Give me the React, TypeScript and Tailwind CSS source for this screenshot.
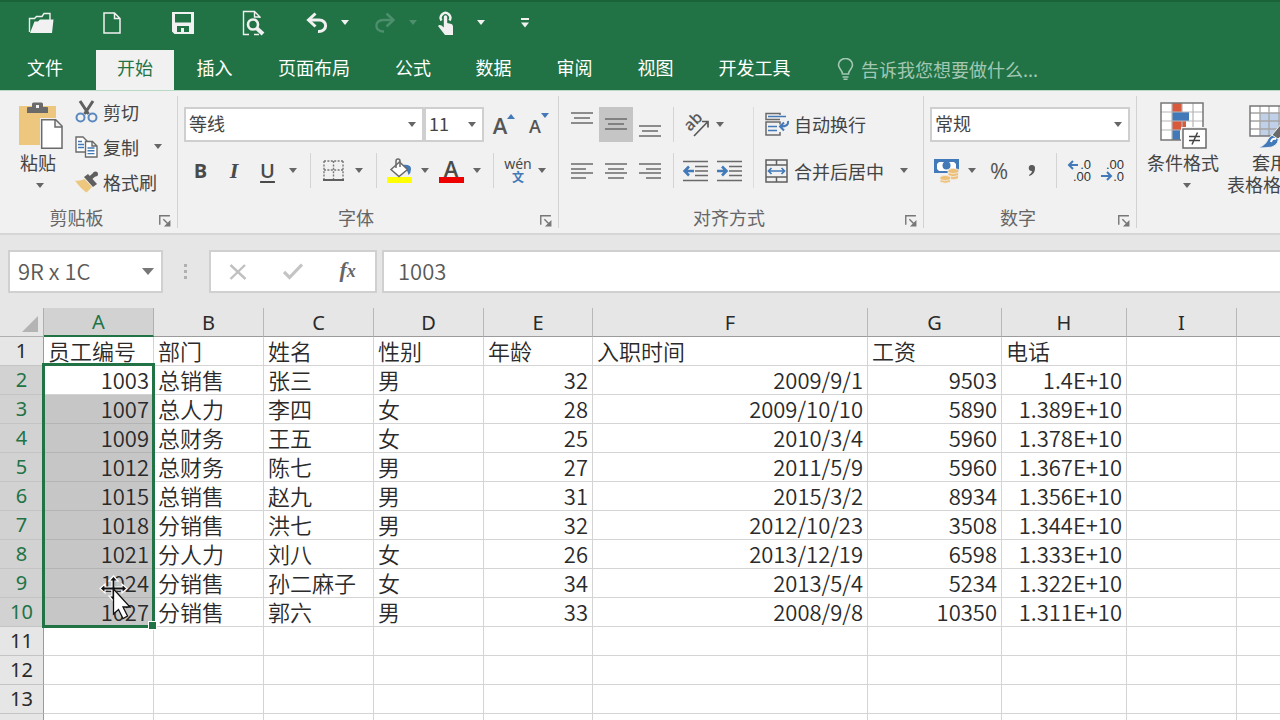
import type { ReactNode } from 'react';
import clsx from 'clsx';

const columns = [
  { name: 'A', width: 'w-[110px]' },
  { name: 'B', width: 'w-[110px]' },
  { name: 'C', width: 'w-[110px]' },
  { name: 'D', width: 'w-[110px]' },
  { name: 'E', width: 'w-[109px]' },
  { name: 'F', width: 'w-[275px]' },
  { name: 'G', width: 'w-[134px]' },
  { name: 'H', width: 'w-[125px]' },
  { name: 'I', width: 'w-[110px]' },
  { name: '', width: 'w-[110px]' },
];

const rows: string[][] = [
  ['员工编号', '部门', '姓名', '性别', '年龄', '入职时间', '工资', '电话'],
  ['1003', '总销售', '张三', '男', '32', '2009/9/1', '9503', '1.4E+10'],
  ['1007', '总人力', '李四', '女', '28', '2009/10/10', '5890', '1.389E+10'],
  ['1009', '总财务', '王五', '女', '25', '2010/3/4', '5960', '1.378E+10'],
  ['1012', '总财务', '陈七', '男', '27', '2011/5/9', '5960', '1.367E+10'],
  ['1015', '总销售', '赵九', '男', '31', '2015/3/2', '8934', '1.356E+10'],
  ['1018', '分销售', '洪七', '男', '32', '2012/10/23', '3508', '1.344E+10'],
  ['1021', '分人力', '刘八', '女', '26', '2013/12/19', '6598', '1.333E+10'],
  ['1024', '分销售', '孙二麻子', '女', '34', '2013/5/4', '5234', '1.322E+10'],
  ['1027', '分销售', '郭六', '男', '33', '2008/9/8', '10350', '1.311E+10'],
  [],
  [],
  [],
  [],
];

const tabs = [
  { label: '文件', width: 'w-[90px] mr-[6px]' },
  { label: '开始', width: 'w-[78px]', active: true },
  { label: '插入', width: 'w-[81px]' },
  { label: '页面布局', width: 'w-[118px]' },
  { label: '公式', width: 'w-[80px]' },
  { label: '数据', width: 'w-[81px]' },
  { label: '审阅', width: 'w-[81px]' },
  { label: '视图', width: 'w-[81px]' },
  { label: '开发工具', width: 'w-[117px]' },
];

function Caret({ className = 'text-[#666666]' }: { className?: string }) {
  return (
    <svg className={className} width="8" height="5" viewBox="0 0 8 5" fill="currentColor">
      <path d="M0 0h8L4 5z" />
    </svg>
  );
}

interface IconButtonProps {
  label: string;
  className?: string;
  children: ReactNode;
}

function IconButton({ label, className, children }: IconButtonProps) {
  return (
    <button type="button" aria-label={label} className={clsx('flex h-[35px] shrink-0 items-center justify-center', className)}>
      {children}
    </button>
  );
}

function Separator({ className }: { className: string }) {
  return (
    <div className={clsx('flex h-[35px] shrink-0 justify-center', className)}>
      <div className="w-px bg-[#d4d4d4]" />
    </div>
  );
}

interface ComboProps {
  label: string;
  value: string;
  className: string;
}

function Combo({ label, value, className }: ComboProps) {
  return (
    <div className={clsx('relative h-[35px] border-2 border-[#cfcfcf] bg-white', className)}>
      <select aria-label={label} defaultValue={value} className="h-full w-full appearance-none px-[3px] pb-[3px] text-lg leading-[28px] text-[#444444] outline-none">
        <option>{value}</option>
      </select>
      <div className="pointer-events-none absolute inset-y-0 right-[6px] flex items-center">
        <Caret />
      </div>
    </div>
  );
}

interface GroupProps {
  title: string;
  className: string;
  children: ReactNode;
}

function Group({ title, className, children }: GroupProps) {
  return (
    <section className={clsx('flex shrink-0 flex-col', className)}>
      <div className="h-[111px]">{children}</div>
      <div className="flex h-[30px] items-center">
        <h2 className="flex-1 text-center text-lg leading-[28px] text-[#666666]">{title}</h2>
        <button type="button" aria-label={`${title}设置`} className="flex h-full w-[24px] items-center pt-[8px] pl-[6px]">
          <svg width="12" height="12" viewBox="0 0 11 11" fill="none" stroke="#777777" strokeWidth="1.3">
            <path d="M.7 9V.7H10M4 4l5 5" />
            <path d="M10.500 4.500v6h-6z" fill="#777777" stroke="none" />
          </svg>
        </button>
      </div>
    </section>
  );
}

function GroupDivider() {
  return <div className="my-[5px] w-px shrink-0 bg-[#d2d2d2]" />;
}

/* Lines are [x1, x2, y] */
function LinesIcon({ lines }: { lines: number[][] }) {
  return (
    <svg width="22" height="26" viewBox="0 0 22 26" stroke="#6a6a6a" strokeWidth="1.5">
      {lines.map(([x1, x2, y]) => (
        <path key={y} d={`M${x1} ${y}H${x2}`} />
      ))}
    </svg>
  );
}

function QuickAccess() {
  return (
    <div className="flex h-[50px] items-center border-t-2 border-[#1a6339] pb-[7px] pl-[5px] text-[#f1f1f1]">
      <IconButton label="打开" className="w-[71px]">
        <svg width="26" height="22" viewBox="0 0 26 22" fill="none" stroke="currentColor" strokeWidth="1.4">
          <path d="M1.500 20V6.500h5l2-2H14l2-3h6V8" />
          <path d="M2 21L6.500 9.500H10l2-2h13.500L24 21z" fill="currentColor" stroke="none" />
        </svg>
      </IconButton>
      <IconButton label="新建" className="w-[71px]">
        <svg width="18" height="22" viewBox="0 0 18 22" fill="none" stroke="currentColor" strokeWidth="1.5">
          <path d="M1 1h10.500l5.500 5.500V21H1zM11.500 1v5.500H17" />
        </svg>
      </IconButton>
      <IconButton label="保存" className="w-[71px]">
        <svg width="22" height="22" viewBox="0 0 22 22" fill="currentColor">
          <path fillRule="evenodd" d="M0 0h22v22H2.500L0 19.500zM3 2v8.500h16V2zM5 14v6h4v-4h3v4h5v-6z" />
        </svg>
      </IconButton>
      <IconButton label="打印预览" className="w-[71px]">
        <svg width="24" height="26" viewBox="0 0 24 26" fill="none" stroke="currentColor">
          <path d="M7 24.500H1.500V1.500h11L18 7v1M12.500 1.500V7H18M12 24.500h5" strokeWidth="1.4" />
          <circle cx="11" cy="14.500" r="5" strokeWidth="2.600" />
          <path d="M15 18.500l6 5.500" strokeWidth="4" />
        </svg>
      </IconButton>
      <IconButton label="撤消" className="ml-2 w-10">
        <svg width="24" height="22" viewBox="0 0 24 22" fill="none" stroke="currentColor" strokeWidth="3">
          <path d="M4 8h10c9 0 9 12-1 11.500" />
          <path d="M10.500 1.500L3.500 8l7 6.500" />
        </svg>
      </IconButton>
      <IconButton label="撤消列表" className="w-4">
        <Caret className="text-[#f1f1f1]" />
      </IconButton>
      <IconButton label="恢复" className="ml-3 w-10 text-[#4d8f6c]">
        <svg width="24" height="22" viewBox="0 0 24 22" fill="none" stroke="currentColor" strokeWidth="2.400">
          <path d="M20 8H10C1 8 1 20 11 19.500" />
          <path d="M13.500 1.500l7 6.500-7 6.500" />
        </svg>
      </IconButton>
      <IconButton label="恢复列表" className="w-4">
        <Caret className="text-[#4d8f6c]" />
      </IconButton>
      <IconButton label="触摸/鼠标模式" className="ml-1 w-10">
        <svg className="ml-[2px]" width="18" height="26" viewBox="0 0 18 26" fill="currentColor">
          <path d="M4.500 10.500a4.800 4.800 0 1 1 8 0" fill="none" stroke="currentColor" strokeWidth="2.400" />
          <path d="M6.800 6.500q1.700-2.500 3.400 0V13l4.300 1q1.500.5 1.500 2.500V25H8L1 16q2-2.500 5.800 1.500z" />
        </svg>
      </IconButton>
      <IconButton label="模式列表" className="w-8">
        <Caret className="text-[#f1f1f1]" />
      </IconButton>
      <IconButton label="自定义快速访问工具栏" className="w-14">
        <svg width="8" height="10" viewBox="0 0 8 10" fill="currentColor">
          <path d="M0 0h8v2H0zM0 4.500h8L4 9.500z" />
        </svg>
      </IconButton>
    </div>
  );
}

function TabBar() {
  return (
    <nav className="flex h-10 items-stretch text-lg text-white">
      {tabs.map((tab) => (
        <button
          key={tab.label}
          type="button"
          className={clsx(
            'flex shrink-0 items-center justify-center pb-[6px] leading-[28px] whitespace-nowrap',
            tab.width,
            tab.active && 'bg-[#f1f1f1] text-[#217346]',
          )}
        >
          {tab.label}
        </button>
      ))}
      <label className="flex flex-1 items-center pb-[2px] pl-[24px] text-[#a3c7b2]">
        <svg width="17" height="22" viewBox="0 0 17 22" fill="none" stroke="currentColor" strokeWidth="1.600">
          <path d="M5.500 16c0-4-4-5-4-9a7 6.500 0 0 1 14 0c0 4-4 5-4 9zM5.500 19h6M6.500 21.200h4" />
        </svg>
        <input
          type="text"
          aria-label="告诉我您想要做什么"
          placeholder="告诉我您想要做什么..."
          className="ml-[7px] h-[28px] flex-1 bg-transparent text-lg leading-[28px] outline-none placeholder:text-[#a3c7b2]"
        />
      </label>
    </nav>
  );
}

function ClipboardGroup() {
  return (
    <Group title="剪贴板" className="w-[177px]">
      <div className="flex whitespace-nowrap">
        <button type="button" className="ml-2 flex w-[60px] flex-col items-center pt-[10px] text-[#444444]">
          <svg width="50" height="48" viewBox="0 0 50 48">
            <path d="M6 5h37v39H6z" fill="#eec77e" />
            <path d="M14 12V7q0-1 1-1h4V3q0-1.500 1.500-1.500h8Q30 1.500 30 3v3h4q1 0 1 1v5z" fill="#6a6a6a" />
            <path d="M23 4h3v3h-3z" fill="#f1f1f1" />
            <path d="M27 17h16.500L50 24v24H27z" fill="#f1f1f1" />
            <path d="M28.700 18.700h14l6.300 6.300v22.200H28.700zM42 18.700V26h7" fill="#fff" stroke="#6a6a6a" strokeWidth="1.500" />
          </svg>
          <span className="pb-[2px] text-lg leading-[26px]">粘贴</span>
          <span className="flex h-4 items-center pl-1">
            <Caret />
          </span>
        </button>
        <div className="flex flex-1 flex-col pt-[3px] pl-[7px] text-lg leading-[28px] text-[#444444]">
          <button type="button" className="flex h-[35px] items-center gap-[5px]">
            <svg width="23" height="24" viewBox="0 0 23 24" fill="none">
              <path d="M5 1l8.500 13M18 1L9.500 14" stroke="#5f5f5f" strokeWidth="3" />
              <circle cx="5.500" cy="17.500" r="4" stroke="#5a88bf" strokeWidth="2" />
              <circle cx="17.500" cy="17.500" r="4" stroke="#5a88bf" strokeWidth="2" />
            </svg>
            剪切
          </button>
          <div className="flex h-[35px] items-center">
            <button type="button" className="flex items-center gap-[5px]">
              <svg width="23" height="22" viewBox="0 0 23 22" fill="#fff" strokeWidth="1.400">
                <path d="M1 1h7l4 4v11H1z" stroke="#6a6a6a" />
                <path d="M3 5.500h4M3 8.500h6M3 11.500h6" stroke="#4279b8" />
                <path d="M10.500 5.500h7l4.500 4.500v11H10.500zM17 5.500V10h5" stroke="#6a6a6a" />
                <path d="M12.500 12h7M12.500 14.800h7M12.500 17.600h7" stroke="#4279b8" />
              </svg>
              复制
            </button>
            <button type="button" aria-label="复制选项" className="flex h-full w-[38px] items-center justify-center">
              <Caret />
            </button>
          </div>
          <button type="button" className="flex h-[35px] items-center gap-[5px]">
            <svg width="23" height="22" viewBox="0 0 23 22">
              <path d="M0 9.500q5 1 9.500-1.500l7.500 8-5.500 5.500Q5 17 0 9.500z" fill="#eec77e" />
              <path d="M9 6l4-3 9 10-4 3z" fill="#5f5f5f" />
              <path d="M15.500 7l5-4.500" stroke="#5f5f5f" strokeWidth="4" />
              <circle cx="20.500" cy="3" r="2.500" fill="#5f5f5f" />
            </svg>
            格式刷
          </button>
        </div>
      </div>
    </Group>
  );
}

function FontGroup() {
  return (
    <Group title="字体" className="w-[380px]">
      <div className="flex flex-col gap-[11px] pt-[16px] pl-[6px] text-[#555555]">
        <div className="flex">
          <Combo label="字体" value="等线" className="w-[240px]" />
          <Combo label="字号" value="11" className="w-[60px]" />
          <IconButton label="增大字号" className="w-[40px]">
            <span className="font-['Open_Sans'] text-[22px] leading-[30px] font-semibold">A</span>
            <svg className="mb-[16px]" width="8" height="5" viewBox="0 0 8 5">
              <path d="M0 5h8L4 0z" fill="#4279b8" />
            </svg>
          </IconButton>
          <IconButton label="减小字号" className="w-[30px]">
            <span className="pt-[2px] font-['Open_Sans'] text-lg leading-[30px] font-semibold">A</span>
            <svg className="mb-[18px]" width="8" height="5" viewBox="0 0 8 5">
              <path d="M0 0h8L4 5z" fill="#4279b8" />
            </svg>
          </IconButton>
        </div>
        <div className="flex font-['Open_Sans'] text-[20px] text-[#4a4a4a]">
          <IconButton label="加粗" className="w-[33px] font-bold">B</IconButton>
          <IconButton label="倾斜" className="w-[34px] font-['Liberation_Serif'] text-[22px] font-bold italic">I</IconButton>
          <IconButton label="下划线" className="w-[33px] font-semibold underline underline-offset-3">U</IconButton>
          <IconButton label="下划线样式" className="w-[18px]"><Caret /></IconButton>
          <Separator className="w-[16px]" />
          <IconButton label="边框" className="w-[30px]">
            <svg width="21" height="21" viewBox="0 0 21 21" fill="none" stroke="#777777" strokeWidth="1.400">
              <path d="M1 1h19M1 10h19M1 1v18M10.500 1v18M20 1v18" strokeDasharray="2 1.400" />
              <path d="M0 20h21" stroke="#5f5f5f" strokeWidth="2" />
            </svg>
          </IconButton>
          <IconButton label="边框样式" className="w-[22px]"><Caret /></IconButton>
          <Separator className="w-[12px]" />
          <IconButton label="填充颜色" className="w-[36px]">
            <svg width="26" height="26" viewBox="0 0 26 26" fill="none">
              <path d="M0 19h25v6H0z" fill="#ffff00" />
              <path d="M15 7q9-1 9 4 0 4-2.500 6-1-6-5-7z" fill="#4279b8" />
              <path d="M4 11.500L12.500 4l8 7.500-8.500 7z" fill="#fff" stroke="#6a6a6a" strokeWidth="1.500" />
              <path d="M9 10V3q0-2 2-2t2 2v6" stroke="#6a6a6a" strokeWidth="1.500" />
            </svg>
          </IconButton>
          <IconButton label="填充颜色列表" className="w-[14px]"><Caret /></IconButton>
          <IconButton label="字体颜色" className="w-[38px] flex-col">
            <span className="h-[18px] text-[22px] leading-[18px] font-semibold">A</span>
            <span className="h-[6px] w-[25px] bg-[#ee0000]" />
          </IconButton>
          <IconButton label="字体颜色列表" className="w-[14px]"><Caret /></IconButton>
          <Separator className="w-[18px]" />
          <IconButton label="拼音指南" className="w-[32px] flex-col">
            <span className="font-['Noto_Sans'] text-sm leading-[12px]">wén</span>
            <span className="font-['Noto_Sans_CJK_SC'] text-xs leading-[13px] font-bold text-[#4279b8]">文</span>
          </IconButton>
          <IconButton label="拼音选项" className="w-[16px]"><Caret /></IconButton>
        </div>
      </div>
    </Group>
  );
}

function IndentIcon({ direction }: { direction: 'left' | 'right' }) {
  return (
    <svg width="26" height="22" viewBox="0 0 26 22" fill="none" stroke="#6a6a6a" strokeWidth="1.500">
      <path d="M0 1.500h25M12 6.500h13M12 11h13M12 15.500h13M0 20.500h25" />
      <path
        d={direction === 'left' ? 'M11 11H2M6 6.500L1.500 11 6 15.500' : 'M0 11h9M5 6.500L9.500 11 5 15.500'}
        stroke="#4279b8"
        strokeWidth="2.600"
      />
    </svg>
  );
}

function AlignmentGroup() {
  return (
    <Group title="对齐方式" className="w-[364px]">
      <div className="flex pt-[16px] pl-[6px]">
        <div className="flex w-[182px] flex-col gap-[11px]">
          <div className="flex">
            <IconButton label="顶端对齐" className="w-[34px]">
              <LinesIcon lines={[[0, 22, 1], [3, 19, 6], [0, 22, 11]]} />
            </IconButton>
            <IconButton label="垂直居中" className="w-[34px] bg-[#c5c5c5]">
              <LinesIcon lines={[[0, 22, 7], [3, 19, 12], [0, 22, 17]]} />
            </IconButton>
            <IconButton label="底端对齐" className="w-[34px]">
              <LinesIcon lines={[[0, 22, 14], [3, 19, 19], [0, 22, 24]]} />
            </IconButton>
            <Separator className="w-[12px]" />
            <IconButton label="方向" className="w-[34px]">
              <svg className="overflow-visible" width="26" height="24" viewBox="0 0 26 24">
                <text x="7" y="19" transform="rotate(-45 7 19)" fontFamily="Open Sans" fontSize="16" fontWeight="600" fill="#5a5a5a">
                  ab
                </text>
                <path d="M11 23L24.500 9M19 8.500h6v6" fill="none" stroke="#5a5a5a" strokeWidth="1.700" />
              </svg>
            </IconButton>
            <IconButton label="方向列表" className="w-[14px]"><Caret /></IconButton>
          </div>
          <div className="flex">
            <IconButton label="左对齐" className="w-[34px]">
              <LinesIcon lines={[[0, 22, 6], [0, 15, 11], [0, 22, 15], [0, 15, 20]]} />
            </IconButton>
            <IconButton label="居中" className="w-[34px]">
              <LinesIcon lines={[[0, 22, 6], [3, 19, 11], [0, 22, 15], [3, 19, 20]]} />
            </IconButton>
            <IconButton label="右对齐" className="w-[34px]">
              <LinesIcon lines={[[0, 22, 6], [7, 22, 11], [0, 22, 15], [7, 22, 20]]} />
            </IconButton>
            <Separator className="w-[12px]" />
            <IconButton label="减少缩进量" className="w-[34px]"><IndentIcon direction="left" /></IconButton>
            <IconButton label="增加缩进量" className="w-[34px]"><IndentIcon direction="right" /></IconButton>
          </div>
        </div>
        <div className="ml-[6px] w-px shrink-0 bg-[#dcdcdc]" />
        <div className="flex flex-col gap-[11px] pl-[11px] text-lg whitespace-nowrap text-[#444444]">
          <button type="button" className="flex h-[35px] items-center gap-[4px] pb-[2px] leading-[28px]">
            <svg width="25" height="24" viewBox="0 0 25 24" fill="none" strokeWidth="1.500">
              <path d="M15 7.500H1v-6h14V3M15 12.500V10H1v13h14v-3" stroke="#6a6a6a" />
              <path d="M3 4.500h18M3 14.500h9M3 18.500h9" stroke="#4279b8" strokeWidth="1.700" />
              <path d="M23 9q1 5.500-7 5.500M19 10.500l-4 4 4 4" stroke="#4279b8" strokeWidth="2" />
            </svg>
            自动换行
          </button>
          <div className="flex h-[35px] items-center leading-[28px]">
            <button type="button" className="flex items-center gap-[6px]">
              <svg width="23" height="24" viewBox="0 0 23 24" fill="none" stroke="#5f5f5f" strokeWidth="1.500">
                <path d="M1 1h21v22H1zM1 6h21M1 18h21M11.500 1v5M11.500 18v5" />
                <path d="M3.500 12h16M6.500 9l-3 3 3 3M16.500 9l3 3-3 3" stroke="#4279b8" strokeWidth="1.700" />
              </svg>
              合并后居中
            </button>
            <button type="button" aria-label="合并选项" className="flex h-full w-[40px] items-center justify-center">
              <Caret />
            </button>
          </div>
        </div>
      </div>
    </Group>
  );
}

function DecimalIcon({ increase }: { increase: boolean }) {
  const arrow = increase ? 'M10 6H1.500M5 2L1 6l4 4' : 'M0 17h9M6 13l4 4-4 4';
  return (
    <svg className="overflow-visible" width="24" height="24" viewBox="0 0 24 24" fontFamily="Liberation Sans" fontSize="13" fontWeight="400" fill="#333333">
      <text x="23" y="10" textAnchor="end">{increase ? '.0' : '.00'}</text>
      <text x="23" y="22" textAnchor="end">{increase ? '.00' : '.0'}</text>
      <path d={arrow} fill="none" stroke="#4279b8" strokeWidth="2" />
    </svg>
  );
}

function NumberGroup() {
  return (
    <Group title="数字" className="w-[212px]">
      <div className="flex flex-col gap-[11px] pt-[16px] pl-[6px] text-[#555555]">
        <Combo label="数字格式" value="常规" className="w-[200px]" />
        <div className="flex">
          <IconButton label="会计数字格式" className="w-[34px]">
            <svg width="26" height="26" viewBox="0 0 26 26">
              <path d="M0 1h25v14H0z" fill="#4279b8" />
              <path d="M5 4h15l2 2v5l-2 2H5l-2-2V6z" fill="#fff" />
              <circle cx="12.500" cy="7.500" r="4" fill="#4279b8" />
              <g fill="#eec077" stroke="#f1f1f1" strokeWidth=".8">
                <path d="M14 11.500q5-2.500 10.500 0v9q-5 2.500-10.500 0z" />
                <path d="M6 18.500q5-2.500 10.500 0v5.500q-5 2.500-10.500 0z" />
                <path d="M14 14.500q5 2.500 10.500 0M14 17.500q5 2.500 10.500 0M6 21.500q5 2.500 10.500 0" fill="none" />
              </g>
            </svg>
          </IconButton>
          <IconButton label="会计格式列表" className="w-[16px]"><Caret /></IconButton>
          <IconButton label="百分比样式" className="w-[38px] font-['Open_Sans'] text-[22px] font-medium">%</IconButton>
          <IconButton label="千位分隔样式" className="w-[28px]">
            <svg width="8" height="14" viewBox="0 0 8 14" fill="#5a5a5a">
              <path d="M3.500 1a3 3 0 0 1 3.500 3.500Q7 10 1.500 12l-.5-1q3-1.500 3-4A3 3 0 0 1 3.500 1z" />
            </svg>
          </IconButton>
          <Separator className="w-[20px]" />
          <IconButton label="增加小数位数" className="w-[28px]"><DecimalIcon increase /></IconButton>
          <IconButton label="减少小数位数" className="ml-[5px] w-[28px]"><DecimalIcon increase={false} /></IconButton>
        </div>
      </div>
    </Group>
  );
}

function StylesGroup() {
  return (
    <div className="flex flex-1 overflow-hidden text-lg text-[#444444]">
      <button type="button" className="ml-[6px] flex w-[80px] shrink-0 flex-col items-center pt-[10px]">
        <svg width="48" height="48" viewBox="0 0 48 48">
          <path d="M2 2h42v37H2z" fill="#fff" />
          <path d="M13 2h10v9H13zM13 20h14v9H13z" fill="#d9593d" />
          <path d="M13 11h17v9H13zM13 29h8v10h-8z" fill="#4279b8" />
          <path d="M13 2v37M23 2v9M23 20v19M34 2v37M2 11h42M2 20h42M2 29h42" stroke="#b5b5b5" strokeWidth="1.200" />
          <path d="M2 2h42v37H2z" fill="none" stroke="#777777" strokeWidth="1.500" />
          <path d="M22 26h26v22H22z" fill="#f1f1f1" />
          <path d="M24 28h23v19H24z" fill="#fff" stroke="#6a6a6a" strokeWidth="1.500" />
          <path d="M30 35.500h11M30 39.500h11M38.500 31.500l-5.500 12" stroke="#444444" strokeWidth="1.500" />
        </svg>
        <span className="pb-[2px] leading-[26px]">条件格式</span>
        <span className="flex h-4 items-center pl-[8px]">
          <Caret />
        </span>
      </button>
      <button type="button" className="flex w-[94px] shrink-0 flex-col items-center pt-[10px]">
        <svg width="44" height="48" viewBox="0 0 44 48">
          <path d="M2 5h40v30H2z" fill="#fff" />
          <path d="M12 12h30v23H12z" fill="#c0d0e8" />
          <path d="M12 5v30M21 5v30M31 5v30M2 12h40M2 20h40M2 28h40" stroke="#a5a5a5" strokeWidth="1.300" />
          <path d="M2 5h40v30H2z" fill="none" stroke="#777777" strokeWidth="1.500" />
          <path d="M10 47q8-3 10-9 4-6 10-4 2 9-6 12-5 1-14 1z" fill="#4279b8" stroke="#f1f1f1" />
          <path d="M24 34L42 12v16L30 38z" fill="#6a6a6a" stroke="#f1f1f1" />
          <path d="M23 41q1-4 5-3" fill="none" stroke="#fff" strokeWidth="2" />
        </svg>
        <span className="leading-[26px]">套用</span>
        <span className="flex items-center gap-[6px] leading-[18px] whitespace-nowrap">
          表格格式
          <Caret />
        </span>
      </button>
    </div>
  );
}

function FormulaBar() {
  return (
    <div className="flex h-[73px] items-start bg-[#e6e6e6] pt-[15px] pl-[8px] text-[22px] text-[#595959]">
      <div className="flex h-[43px] w-[155px] shrink-0 border-2 border-[#d0d0d0] bg-white">
        <input aria-label="名称框" defaultValue="9R x 1C" className="w-[124px] pb-[3px] pl-[8px] font-[350] outline-none" />
        <button type="button" aria-label="名称列表" className="flex flex-1 items-center justify-center">
          <svg width="12" height="7" viewBox="0 0 12 7">
            <path d="M0 0h12L6 7z" fill="#777777" />
          </svg>
        </button>
      </div>
      <div className="flex h-[43px] w-[46px] shrink-0 items-center justify-center">
        <svg width="4" height="16" viewBox="0 0 4 16" fill="#b0b0b0">
          <path d="M0 0h3v3H0zM0 6h3v3H0zM0 12h3v3H0z" />
        </svg>
      </div>
      <div className="flex h-[43px] w-[168px] shrink-0 border-2 border-[#d0d0d0] bg-white">
        <button type="button" aria-label="取消" className="flex flex-1 items-center justify-center">
          <svg width="18" height="16" viewBox="0 0 18 16">
            <path d="M1.500 1l15 14M16 1L1.500 15" stroke="#c0c0c0" strokeWidth="2.400" />
          </svg>
        </button>
        <button type="button" aria-label="输入" className="flex flex-1 items-center justify-center">
          <svg width="20" height="17" viewBox="0 0 20 17">
            <path d="M1 9l5.500 5.500L19 1.500" fill="none" stroke="#c4c4c4" strokeWidth="3.200" />
          </svg>
        </button>
        <button type="button" aria-label="插入函数" className="flex-1 pb-[4px] font-['Liberation_Serif'] text-[22px] leading-[34px] font-bold text-[#666666] italic">
          f<span className="text-lg">x</span>
        </button>
      </div>
      <input aria-label="编辑栏" defaultValue="1003" className="ml-[5px] h-[43px] min-w-0 flex-1 border-2 border-r-0 border-[#d0d0d0] bg-white pb-[3px] pl-[14px] font-[350] outline-none" />
    </div>
  );
}

function Sheet() {
  return (
    <div className="relative flex-1 overflow-hidden bg-white">
      <table className="w-[1347px] table-fixed border-separate border-spacing-0 text-[22px] leading-[26px] text-[#2a2a2a]">
        <thead>
          <tr className="h-[29px] font-['Noto_Sans'] text-[20px]">
            <th aria-label="全选" className="w-[44px] border-r border-b border-[#b0b0b0] bg-[#e6e6e6] p-0 pt-[4px] pr-[5px]">
              <svg className="ml-auto" width="17" height="17" viewBox="0 0 17 17">
                <path d="M17 0v16H1z" fill="#b4b4b4" />
              </svg>
            </th>
            {columns.map((column, index) => (
              <th
                key={index}
                scope="col"
                className={clsx(
                  'border-r p-0 pt-[1px] text-center font-normal',
                  column.width,
                  index === 0
                    ? 'border-b-2 border-r-[#b0b0b0] border-b-[#217346] bg-[#d2d2d2] text-[#217346]'
                    : 'border-b border-r-[#b8b8b8] border-b-[#9b9b9b] bg-[#e6e6e6]',
                )}
              >
                {column.name}
              </th>
            ))}
          </tr>
        </thead>
        <tbody>
          {rows.map((row, r) => {
            const selected = r >= 1 && r <= 9;
            return (
              <tr key={r} className="h-[29px]">
                <th
                  scope="row"
                  className={clsx(
                    "border-r border-b border-r-[#9b9b9b] border-b-[#c4c4c4] p-0 font-['Noto_Sans'] text-[20px] font-normal",
                    selected ? 'bg-[#d2d2d2] text-[#217346]' : 'bg-[#e6e6e6]',
                  )}
                >
                  {r + 1}
                </th>
                {columns.map((_, c) => {
                  const isNumber = r > 0 && (c === 0 || c >= 4);
                  return (
                    <td
                      key={c}
                      className={clsx(
                        'border-r border-b border-[#d4d4d4] px-[4px] pt-0 pb-[2px] font-[350] whitespace-nowrap',
                        isNumber && 'text-right',
                        c === 0 && r >= 2 && r <= 9 && 'border-b-[#b4b4b4] bg-[#c6c6c6]',
                      )}
                    >
                      {row[c]}
                    </td>
                  );
                })}
              </tr>
            );
          })}
        </tbody>
      </table>

      {/* Selection frame and fill handle */}
      <div className="pointer-events-none absolute top-[55px] left-[42px] h-[265px] w-[113px] border-[3px] border-[#217346]">
        <div className="absolute -right-[5px] -bottom-[5px] h-[9px] w-[9px] border border-white bg-[#217346]" />
      </div>

      {/* Mouse pointer */}
      <svg className="pointer-events-none absolute top-[267px] left-[99px]" width="34" height="46" viewBox="0 0 34 46">
        <g stroke="#fff" strokeWidth="1.200" fill="#111">
          <path d="M14.500 1l4.500 5h-3v6h7V9l5 4.500-5 4.500v-3h-7v6h3l-4.500 5-4.500-5h3v-6H6v3l-5-4.500L6 9v3h7V6h-3z" />
        </g>
        <path d="M14.500 14v25l5-4.500 4.500 9 4.500-2.500-4.500-9h7z" fill="#fff" stroke="#111" strokeWidth="1.300" />
      </svg>
    </div>
  );
}

export default function App() {
  return (
    <div className="flex h-screen flex-col overflow-hidden bg-[#e6e6e6] font-['Noto_Sans_CJK_SC',sans-serif]">
      <header className="shrink-0 bg-[#217346]">
        <QuickAccess />
        <TabBar />
      </header>
      <div className="flex h-[145px] shrink-0 border-t border-b-2 border-t-[#b9d9c6] border-b-[#d6d6d6] bg-[#f1f1f1]">
        <ClipboardGroup />
        <GroupDivider />
        <FontGroup />
        <GroupDivider />
        <AlignmentGroup />
        <GroupDivider />
        <NumberGroup />
        <GroupDivider />
        <StylesGroup />
      </div>
      <FormulaBar />
      <Sheet />
    </div>
  );
}
